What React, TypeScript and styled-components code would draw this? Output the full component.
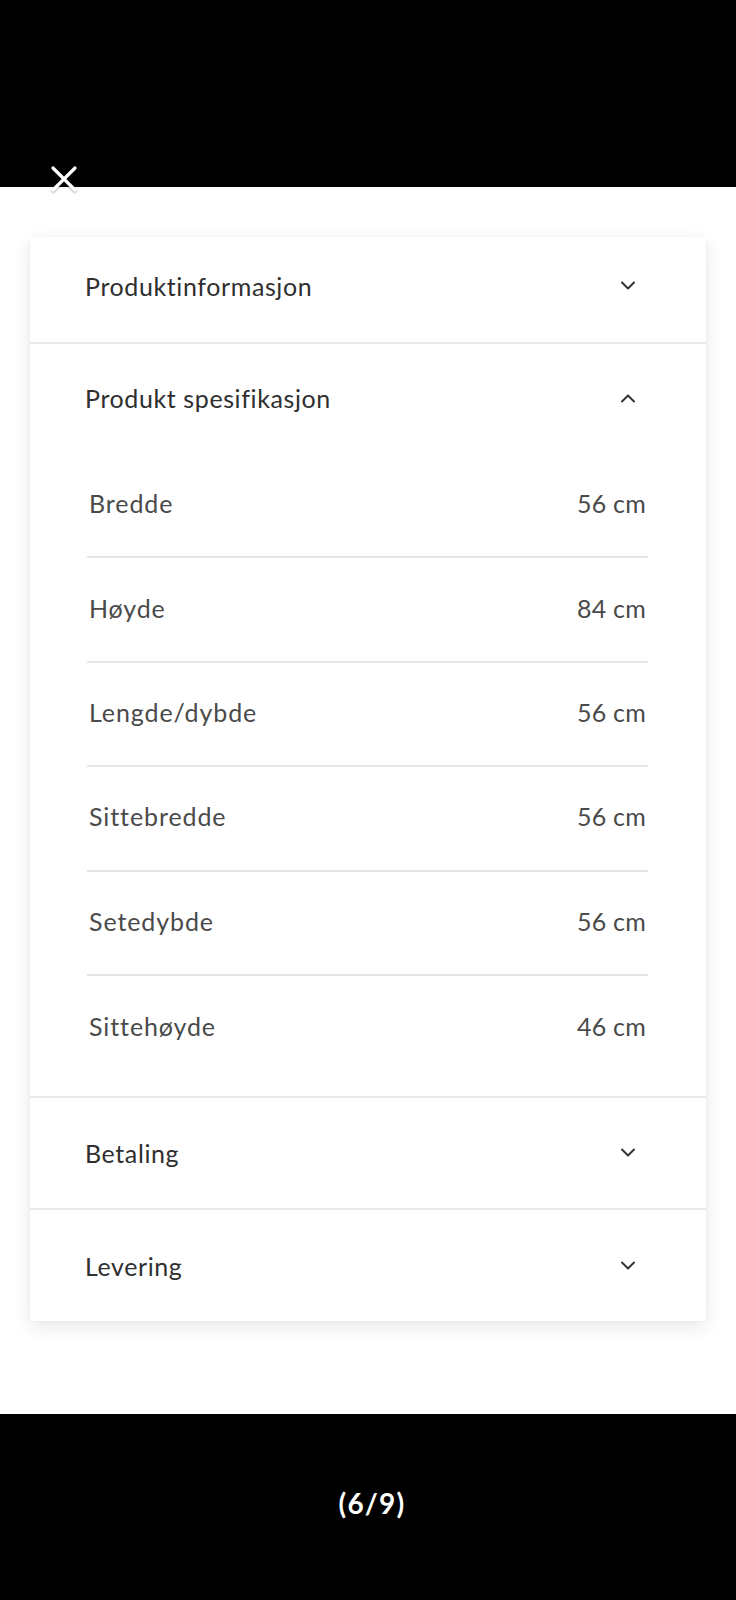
import { createGlobalStyle } from "styled-components";
import styled from "styled-components";

const GlobalStyle = createGlobalStyle`
  html, body {
    margin: 0;
    padding: 0;
    background: #fff;
  }
  body {
    font-family: Lato, "Noto Sans", "Liberation Sans", sans-serif;
  }
`;

const Page = styled.div`
  display: flex;
  flex-direction: column;
  width: 736px;
  height: 1600px;
`;

const TopBar = styled.div`
  height: 187px;
  background: #000;
  display: flex;
  align-items: flex-end;
  padding-left: 50px;
  flex-shrink: 0;
`;

const CloseButton = styled.div`
  width: 28px;
  height: 28px;
  transform: translateY(6px);
  filter: drop-shadow(0 1px 1px rgba(0, 0, 0, 0.35));
`;

const Main = styled.div`
  height: 1227px;
  padding: 50px 30px 0;
  box-sizing: border-box;
  flex-shrink: 0;
`;

const Card = styled.div`
  background: #fff;
  box-shadow: 0 6px 18px rgba(0, 0, 0, 0.09), 0 0 6px rgba(0, 0, 0, 0.04);
  display: flex;
  flex-direction: column;
`;

const Section = styled.div<{ $last?: boolean }>`
  border-bottom: ${(p) => (p.$last ? "none" : "2px solid #e8e8e8")};
`;

const SectionHeader = styled.div<{ $h: number; $pb: number }>`
  height: ${(p) => p.$h}px;
  box-sizing: border-box;
  display: flex;
  align-items: center;
  justify-content: space-between;
  padding: 0 70px ${(p) => p.$pb}px 55px;
`;

const SectionTitle = styled.span`
  font-size: 25px;
  color: #2f2f2f;
  letter-spacing: 0.6px;
`;

const SpecList = styled.div`
  padding: 0 58px 16px 57px;
  margin-top: -3px;
`;

const SpecRow = styled.div<{ $last?: boolean }>`
  height: 104.4px;
  box-sizing: border-box;
  display: flex;
  align-items: center;
  justify-content: space-between;
  padding: 0 2px 4px;
  border-bottom: ${(p) => (p.$last ? "none" : "2px solid #e6e6e6")};
`;

const SpecLabel = styled.span`
  font-size: 25px;
  color: #4a4a4a;
  letter-spacing: 0.9px;
`;

const SpecValue = styled.span`
  font-size: 25px;
  color: #4a4a4a;
  letter-spacing: 0.2px;
`;

const BottomBar = styled.div`
  flex: 1;
  background: #000;
  display: flex;
  align-items: center;
  justify-content: center;
  color: #fff;
  font-size: 28px;
  font-weight: 700;
  letter-spacing: 1.2px;
  padding: 0 0 8px 8px;
`;

const Chevron = ({ up }: { up?: boolean }) => (
  <svg width="16" height="10" viewBox="0 0 16 10">
    <polyline
      points={up ? "2,8.5 8,2.5 14,8.5" : "2,1.5 8,7.5 14,1.5"}
      fill="none"
      stroke="#333"
      strokeWidth="2"
      strokeLinecap="round"
      strokeLinejoin="round"
    />
  </svg>
);

const specs = [
  ["Bredde", "56 cm"],
  ["Høyde", "84 cm"],
  ["Lengde/dybde", "56 cm"],
  ["Sittebredde", "56 cm"],
  ["Setedybde", "56 cm"],
  ["Sittehøyde", "46 cm"],
];

export default function App() {
  return (
    <Page>
      <GlobalStyle />
      <TopBar>
        <CloseButton>
          <svg width="28" height="28" viewBox="0 0 28 28">
            <path
              d="M3 3 L25 25 M25 3 L3 25"
              stroke="#fff"
              strokeWidth="3.2"
              strokeLinecap="round"
            />
          </svg>
        </CloseButton>
      </TopBar>
      <Main>
        <Card>
          <Section>
            <SectionHeader $h={105} $pb={7}>
              <SectionTitle>Produktinformasjon</SectionTitle>
              <Chevron />
            </SectionHeader>
          </Section>
          <Section>
            <SectionHeader $h={113} $pb={6}>
              <SectionTitle>Produkt spesifikasjon</SectionTitle>
              <Chevron up />
            </SectionHeader>
            <SpecList>
              {specs.map(([label, value], i) => (
                <SpecRow key={label} $last={i === specs.length - 1}>
                  <SpecLabel>{label}</SpecLabel>
                  <SpecValue>{value}</SpecValue>
                </SpecRow>
              ))}
            </SpecList>
          </Section>
          <Section>
            <SectionHeader $h={110} $pb={0}>
              <SectionTitle>Betaling</SectionTitle>
              <Chevron />
            </SectionHeader>
          </Section>
          <Section $last>
            <SectionHeader $h={111} $pb={0}>
              <SectionTitle>Levering</SectionTitle>
              <Chevron />
            </SectionHeader>
          </Section>
        </Card>
      </Main>
      <BottomBar>(6/9)</BottomBar>
    </Page>
  );
}
